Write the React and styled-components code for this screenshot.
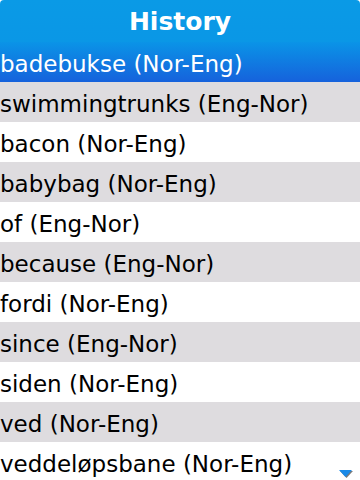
import React from 'react';
import styled, { createGlobalStyle } from 'styled-components';

const items = [
  'badebukse (Nor-Eng)',
  'swimmingtrunks (Eng-Nor)',
  'bacon (Nor-Eng)',
  'babybag (Nor-Eng)',
  'of (Eng-Nor)',
  'because (Eng-Nor)',
  'fordi (Nor-Eng)',
  'since (Eng-Nor)',
  'siden (Nor-Eng)',
  'ved (Nor-Eng)',
  'veddeløpsbane (Nor-Eng)',
];

export default function App() {
  return (
    <Screen>
      <Global />
      <Title>History</Title>
      <List>
        {items.map((t, i) => (
          <Row key={t} selected={i === 0} shaded={i % 2 === 1}>
            {t}
          </Row>
        ))}
      </List>
      <ScrollArrow width="16" height="10" viewBox="0 0 16 10">
        <path d="M2 1 L15 1 L8.5 8 Z" fill="#222" opacity="0.6" />
        <path d="M1 0 L14 0 L7.5 7 Z" fill="#1a8ae8" />
      </ScrollArrow>
    </Screen>
  );
}

const Global = createGlobalStyle`
  body {
    margin: 0;
    background: #fff;
    font-family: "DejaVu Sans", sans-serif;
  }
`;

const Screen = styled.div`
  position: relative;
  width: 360px;
  height: 480px;
  overflow: hidden;
  background: #fff;
  border-radius: 4px 4px 0 0;
`;

const Title = styled.div`
  height: 42px;
  display: flex;
  align-items: center;
  justify-content: center;
  background: linear-gradient(#0a9ae6, #0a97e6);
  color: #fff;
  font-weight: bold;
  font-size: 25px;
  padding-top: 1px;
  box-sizing: border-box;
`;

const List = styled.div`
  display: flex;
  flex-direction: column;
`;

const Row = styled.div`
  height: 40px;
  flex-shrink: 0;
  display: flex;
  align-items: center;
  padding-top: 3px;
  box-sizing: border-box;
  font-size: 23px;
  color: ${p => (p.selected ? '#fff' : '#000')};
  background: ${p =>
    p.selected
      ? 'linear-gradient(#0a94e7, #1662dc)'
      : p.shaded
      ? '#dedcdf'
      : '#fff'};
  white-space: nowrap;
`;

const ScrollArrow = styled.svg`
  position: absolute;
  right: 6px;
  bottom: 0;
`;
